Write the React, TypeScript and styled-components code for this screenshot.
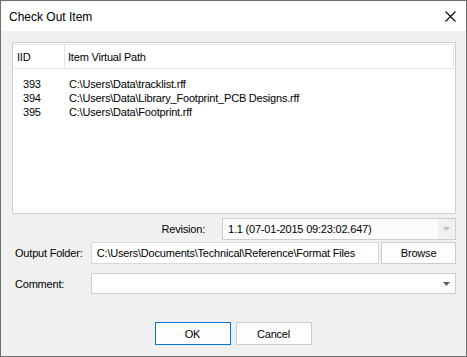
import styled, { createGlobalStyle } from "styled-components";

const GlobalStyle = createGlobalStyle`
  html, body {
    margin: 0;
    padding: 0;
    background: #ffffff;
  }
  * {
    box-sizing: border-box;
  }
`;

const Window = styled.div`
  width: 467px;
  height: 357px;
  border: 1px solid #6e6e6e;
  display: flex;
  flex-direction: column;
  font-family: "Liberation Sans", Arial, sans-serif;
  font-size: 11px;
  color: #000000;
`;

const TitleBar = styled.div`
  height: 30px;
  background: #ffffff;
  display: flex;
  align-items: center;
  justify-content: space-between;
  padding: 0 8px 0 8px;
`;

const Title = styled.span`
  font-size: 12px;
  padding-top: 1px;
`;

const CloseButton = styled.div`
  width: 14px;
  height: 14px;
  margin-right: 1px;
  display: flex;
  align-items: center;
  justify-content: center;
`;

const Body = styled.div`
  flex-grow: 1;
  background: #f0f0f0;
  padding: 11px 10px 0 11px;
  display: flex;
  flex-direction: column;
  letter-spacing: -0.2px;
`;

const ListBox = styled.div`
  height: 172px;
  border: 1px solid #cfcfcf;
  background: #ffffff;
  display: flex;
  flex-direction: column;
`;

const HeaderRow = styled.div`
  height: 25px;
  display: flex;
  border-top: 1px solid #e6e6e6;
  border-bottom: 1px solid #e3e3e3;
  margin: 1px 1px 0 1px;
`;

const HeaderCell = styled.div<{ $width?: number }>`
  width: ${(p) => (p.$width ? `${p.$width}px` : "auto")};
  flex-grow: ${(p) => (p.$width ? 0 : 1)};
  display: flex;
  align-items: center;
  padding-left: 2px;
  border-right: 1px solid #e3e3e3;
  border-left: 1px solid #ffffff;
`;

const Rows = styled.div`
  padding-top: 8px;
  display: flex;
  flex-direction: column;
`;

const Row = styled.div`
  height: 14px;
  display: flex;
  align-items: center;
`;

const IdCell = styled.span`
  width: 56px;
  padding-left: 10px;
`;

const PathCell = styled.span`
  white-space: nowrap;
`;

const RevisionRow = styled.div`
  display: flex;
  justify-content: flex-end;
  align-items: center;
  margin-top: 4px;
`;

const RevisionLabel = styled.span`
  margin-right: 17px;
`;

const FieldRow = styled.div<{ $top: number }>`
  display: flex;
  align-items: center;
  margin-top: ${(p) => p.$top}px;
`;

const Label = styled.span`
  width: 79px;
  padding-left: 3px;
  white-space: nowrap;
`;

const Combo = styled.div<{ $width?: number; $disabled?: boolean; $height: number }>`
  width: ${(p) => (p.$width ? `${p.$width}px` : "auto")};
  flex-grow: ${(p) => (p.$width ? 0 : 1)};
  height: ${(p) => p.$height}px;
  border: 1px solid #cccccc;
  background: ${(p) => (p.$disabled ? "#fcfcfc" : "#ffffff")};
  display: flex;
  align-items: center;
  padding-left: 5px;
  white-space: nowrap;
`;

const ComboText = styled.span`
  flex-grow: 1;
`;

const ArrowBox = styled.div<{ $disabled?: boolean }>`
  width: 17px;
  height: 100%;
  background: ${(p) => (p.$disabled ? "#f0f0f0" : "transparent")};
  display: flex;
  align-items: center;
  justify-content: center;
`;

const TextField = styled.div`
  width: 289px;
  height: 22px;
  border: 1px solid #d9d9d9;
  background: #ffffff;
  display: flex;
  align-items: center;
  padding-left: 5px;
  white-space: nowrap;
  overflow: hidden;
`;

const Button = styled.div<{ $primary?: boolean; $width: number; $height: number; $left?: number }>`
  width: ${(p) => p.$width}px;
  height: ${(p) => p.$height}px;
  margin-left: ${(p) => p.$left ?? 0}px;
  border: 1px solid ${(p) => (p.$primary ? "#0078d7" : "#cccccc")};
  background: #fdfdfd;
  display: flex;
  align-items: center;
  justify-content: center;
`;

const ButtonBar = styled.div`
  display: flex;
  justify-content: center;
  gap: 5px;
  margin-top: 28px;
  padding-right: 2px;
`;

const Arrow = ({ color }: { color: string }) => (
  <svg width="7" height="4" viewBox="0 0 7 4">
    <path d="M0 0 H7 L3.5 4 Z" fill={color} />
  </svg>
);

const items = [
  { iid: "393", path: "C:\\Users\\Data\\tracklist.rff" },
  { iid: "394", path: "C:\\Users\\Data\\Library_Footprint_PCB Designs.rff" },
  { iid: "395", path: "C:\\Users\\Data\\Footprint.rff" },
];

function App() {
  return (
    <>
      <GlobalStyle />
      <Window>
        <TitleBar>
          <Title>Check Out Item</Title>
          <CloseButton>
            <svg width="11" height="11" viewBox="0 0 11 11">
              <path d="M0.5 0.5 L10.5 10.5 M10.5 0.5 L0.5 10.5" stroke="#000" strokeWidth="1.1" />
            </svg>
          </CloseButton>
        </TitleBar>
        <Body>
          <ListBox>
            <HeaderRow>
              <HeaderCell $width={51}>IID</HeaderCell>
              <HeaderCell>Item Virtual Path</HeaderCell>
            </HeaderRow>
            <Rows>
              {items.map((item) => (
                <Row key={item.iid}>
                  <IdCell>{item.iid}</IdCell>
                  <PathCell>{item.path}</PathCell>
                </Row>
              ))}
            </Rows>
          </ListBox>
          <RevisionRow>
            <RevisionLabel>Revision:</RevisionLabel>
            <Combo $width={234} $height={22} $disabled>
              <ComboText>1.1 (07-01-2015 09:23:02.647)</ComboText>
              <ArrowBox $disabled>
                <Arrow color="#c0c0c0" />
              </ArrowBox>
            </Combo>
          </RevisionRow>
          <FieldRow $top={2}>
            <Label>Output Folder:</Label>
            <TextField>C:\Users\Documents\Technical\Reference\Format Files</TextField>
            <Button $width={75} $height={22} $left={2}>
              Browse
            </Button>
          </FieldRow>
          <FieldRow $top={9}>
            <Label>Comment:</Label>
            <Combo $height={21}>
              <ComboText />
              <ArrowBox>
                <Arrow color="#606060" />
              </ArrowBox>
            </Combo>
          </FieldRow>
          <ButtonBar>
            <Button $primary $width={76} $height={23}>
              OK
            </Button>
            <Button $width={76} $height={23}>
              Cancel
            </Button>
          </ButtonBar>
        </Body>
      </Window>
    </>
  );
}

export default App;
